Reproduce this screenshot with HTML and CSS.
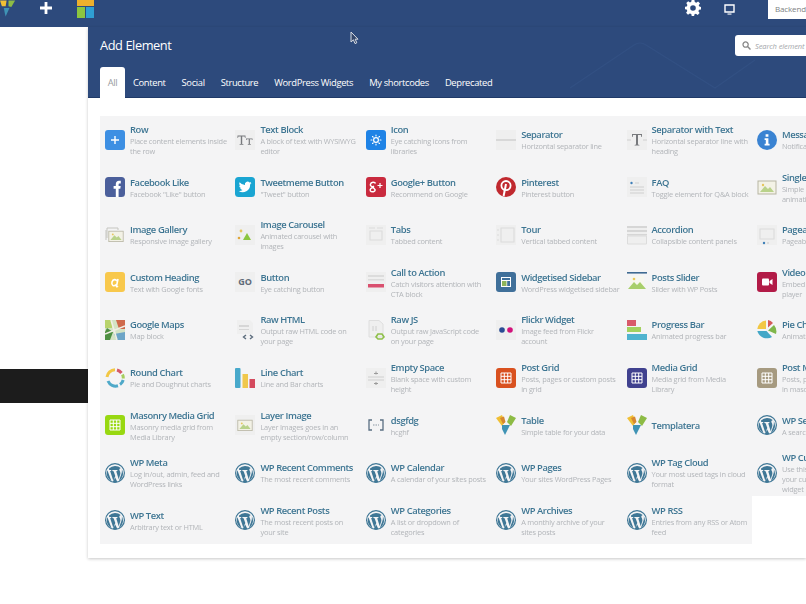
FILE: index.html
```html
<!DOCTYPE html>
<html lang="en">
<head>
<meta charset="utf-8">
<title>Add Element</title>
<link rel="stylesheet" href="styles.css">
</head>
<body>
<svg class="sprite" xmlns="http://www.w3.org/2000/svg">
  <symbol id="wp" viewBox="0 0 20 20"><circle cx="10" cy="10" r="9.4" fill="none" stroke="#3f7796" stroke-width="1.2"/><path fill="#3f7796" d="M2.4 7.2 6.6 18.4A9 9 0 0 1 2.4 7.2ZM4 5.4A9 9 0 0 1 16 5.2C14.6 5 13.9 6.4 14.6 7.6 15.3 9 15.6 10 15.2 11.6L13.7 16.2 11.2 8.2 12.4 8V7H7.4V8L8.6 8.2 10.3 13 8.3 17.8 5.1 8.1 6.2 8V7H4.2ZM10.2 14.4 12.4 18.9A9 9 0 0 1 7.8 19ZM16.8 6.2A9 9 0 0 1 13.8 18.3L16.4 11C16.9 9.4 17 7.8 16.8 6.2Z"/></symbol>
  <symbol id="vc" viewBox="0 0 20 20"><path fill="#f0bf35" d="M0 3 6 0 9 7 6 11Z"/><path fill="#8dbb45" d="M11 7 14 0 20 3 15 11Z"/><path fill="#3f93b5" d="M6 10 14 10 9 20 6 14Z"/><path fill="#d6872f" d="M4 3 8 1.500 9.500 7 7 9Z"/></symbol>
  <symbol id="img" viewBox="0 0 20 20"><rect x="1" y="4" width="18" height="13" fill="#f3f2e6" stroke="#b7b5a3"/><path fill="#b9d28a" d="M3 15 8 9 11 12 13 10 17 15Z"/><circle cx="6" cy="8" r="1.2" fill="#e5c65d"/></symbol>
  <symbol id="grid" viewBox="0 0 20 20"><path fill="none" stroke="#fff" stroke-width="1" d="M5 5H15V15H5ZM8.3 5V15M11.7 5V15M5 8.3H15M5 11.7H15"/></symbol>
</svg>

<header class="topbar">
  <svg class="logo" viewBox="0 0 18 18"><path fill="#f0bf35" d="M0 0H7L6 6 2 6Z"/><path fill="#8dbb45" d="M9 0H16L12 7 9 6Z"/><path fill="#3f93b5" d="M4 8 10 8 6 17 5 13Z"/></svg>
  <svg class="plus" viewBox="0 0 12 12"><path fill="#fff" d="M4.6 0H7.4V4.6H12V7.4H7.4V12H4.6V7.4H0V4.6H4.6Z"/></svg>
  <svg class="layout" viewBox="0 0 17 18"><rect width="17" height="6" fill="#eeb02c"/><rect y="7" width="8" height="11" fill="#8cc63f"/><rect x="9" y="7" width="8" height="11" fill="#2f9fd3"/></svg>
  <span class="spacer"></span>
  <svg class="gear" viewBox="0 0 16 16"><path fill="#fff" fill-rule="evenodd" d="M6.6 0H9.4L9.8 2.1 11.3 2.7 13.1 1.5 15 3.4 13.7 5.2 14.3 6.6 16 7V9.4L14 9.8 13.4 11.3 14.6 13.1 12.7 15 10.9 13.7 9.5 14.3 9.1 16H6.7L6.3 14.1 4.8 13.5 3 14.7 1.1 12.8 2.3 11 1.7 9.6 0 9.2V6.8L1.8 6.4 2.4 4.9 1.3 3.1 3.2 1.2 5 2.4 6.3 1.8ZM8 5.2A2.8 2.8 0 1 0 8 10.8 2.8 2.8 0 1 0 8 5.2Z"/></svg>
  <svg class="monitor" viewBox="0 0 11 11"><path fill="none" stroke="#fff" stroke-width="1.4" d="M1 1H10V8H1Z"/><path fill="#fff" d="M3.5 9.5H7.5V10.6H3.5Z"/></svg>
  <div class="backend">Backend Editor</div>
</header>

<main class="workspace">
  <aside class="side"><div class="blackbar"></div></aside>
  <section class="modal">
    <div class="modal-head">
      <svg class="decor" viewBox="0 0 240 60"><path fill="none" stroke="#325083" stroke-width="1.2" d="M4 51 68 8Q74 4 80 8L149 51 189 23"/></svg>
      <div class="head-top">
        <h1 class="title">Add Element</h1>
        <div class="search">
          <svg class="search-ico" viewBox="0 0 10 10"><circle cx="4" cy="4" r="2.9" fill="none" stroke="#888" stroke-width="1.4"/><path stroke="#888" stroke-width="1.6" d="M6.2 6.2 9.4 9.4"/></svg>
          <span class="search-text">Search element</span>
        </div>
        <svg class="cursor" viewBox="0 0 9 14"><path fill="#33466a" stroke="#d9dde4" stroke-width="1" d="M1 1V11L3.4 8.8 5 12.6 6.8 11.8 5.2 8.2H8Z"/></svg>
      </div>
      <nav class="tabs">
        <span class="tab active">All</span>
        <span class="tab">Content</span>
        <span class="tab">Social</span>
        <span class="tab">Structure</span>
        <span class="tab">WordPress Widgets</span>
        <span class="tab">My shortcodes</span>
        <span class="tab">Deprecated</span>
      </nav>
    </div>

    <div class="grid">
      <!-- row 1 -->
      <article class="item"><svg class="ico" viewBox="0 0 20 20"><rect width="20" height="20" rx="3" fill="#3d8fe3"/><path fill="#fff" d="M9.3 6H10.7V9.3H14V10.7H10.7V14H9.3V10.7H6V9.3H9.3Z"/></svg><div class="txt"><h2>Row</h2><p class="oneline">Place content elements inside<br>the row</p></div></article>
      <article class="item"><svg class="ico" viewBox="0 0 20 20"><rect width="20" height="20" fill="#efefef"/><path fill="#77797c" d="M2.5 5.5H10.5V8H10L9.6 6.4H7.2V14H8.4V14.8H4.6V14H5.8V6.4H3.4L3 8H2.5ZM11 8.5H17.5V10H17L16.7 9.2H14.9V14H15.8V14.8H12.8V14H13.7V9.2H11.8L11.5 10H11Z"/></svg><div class="txt"><h2>Text Block</h2><p>A block of text with WYSIWYG editor</p></div></article>
      <article class="item"><svg class="ico" viewBox="0 0 20 20"><rect width="20" height="20" rx="3" fill="#1f83e6"/><circle cx="10" cy="10" r="2.4" fill="none" stroke="#fff" stroke-width="1.2"/><path stroke="#fff" stroke-width="1.1" stroke-linecap="round" d="M10 5V6M10 14V15M5 10H6M14 10H15M6.5 6.5 7.2 7.2M12.8 12.8 13.5 13.5M6.5 13.5 7.2 12.8M12.8 7.2 13.5 6.5"/></svg><div class="txt"><h2>Icon</h2><p>Eye catching icons from libraries</p></div></article>
      <article class="item"><svg class="ico" viewBox="0 0 20 20"><rect width="20" height="20" fill="#efefef"/><rect y="9.4" width="20" height="1.2" fill="#c9c9c9"/></svg><div class="txt"><h2>Separator</h2><p>Horizontal separator line</p></div></article>
      <article class="item"><svg class="ico" viewBox="0 0 20 20"><rect width="20" height="20" fill="#efefef"/><path fill="#77797c" d="M5 4H15V7H14.4L14 5H11V14.5L12.4 15V15.6H7.6V15L9 14.5V5H6L5.6 7H5Z"/><path stroke="#cfcfcf" d="M16 10H20M0 10H4"/></svg><div class="txt"><h2>Separator with Text</h2><p>Horizontal separator line with heading</p></div></article>
      <article class="item"><svg class="ico" viewBox="0 0 20 20"><circle cx="10" cy="10" r="10" fill="#3a83d2"/><path fill="#fff" d="M8.6 4.2H11.4V6.8H8.6ZM7.6 8.2H11.4V13.8H12.6V15.6H7.6V13.8H8.8V10H7.6Z"/></svg><div class="txt"><h2>Message Box</h2><p>Notification box</p></div></article>
      <!-- row 2 -->
      <article class="item"><svg class="ico" viewBox="0 0 20 20"><rect width="20" height="20" rx="3.5" fill="#4b5f9b"/><path fill="#fff" d="M10.8 20V11.8H8.6V9H10.8V7.2C10.8 5 12 3.8 14 3.8H15.8V6.6H14.6C13.8 6.6 13.6 7 13.6 7.7V9H15.7L15.3 11.8H13.6V20Z"/></svg><div class="txt"><h2>Facebook Like</h2><p>Facebook "Like" button</p></div></article>
      <article class="item"><svg class="ico" viewBox="0 0 20 20"><rect width="20" height="20" rx="3.5" fill="#1aa5d2"/><path fill="#fff" d="M16.5 6C16 6.3 15.5 6.4 15 6.5 15.5 6.2 15.9 5.7 16.1 5 15.6 5.3 15 5.5 14.5 5.6A2.6 2.6 0 0 0 10 8 7.4 7.4 0 0 1 4.6 5.2C3.9 6.4 4.3 7.9 5.4 8.7 5 8.7 4.6 8.6 4.2 8.4 4.2 9.7 5.1 10.8 6.3 11 5.9 11.1 5.5 11.2 5.1 11.1 5.5 12.2 6.4 12.9 7.6 12.9A5.3 5.3 0 0 1 3.7 14 7.4 7.4 0 0 0 15.1 7.5C15.7 7.1 16.2 6.6 16.5 6Z"/></svg><div class="txt"><h2>Tweetmeme Button</h2><p>"Tweet" button</p></div></article>
      <article class="item"><svg class="ico" viewBox="0 0 20 20"><rect width="20" height="20" rx="3" fill="#c92a3e"/><path fill="none" stroke="#fff" stroke-width="1.5" d="M9.5 6.5C9 5 5 4.6 4.4 7.4 4 9.4 6.6 10.2 8 9.2M7.8 10.5C5.4 10.6 3.5 12 4.4 13.8 5.6 15.6 9.6 14.8 9 12.8 8.8 11.8 7.4 11.2 7.2 10.3"/><path stroke="#fff" stroke-width="1.2" d="M14 6V11M11.5 8.5H16.5"/></svg><div class="txt"><h2>Google+ Button</h2><p>Recommend on Google</p></div></article>
      <article class="item"><svg class="ico" viewBox="0 0 20 20"><circle cx="10" cy="10" r="10" fill="#c0292f"/><circle cx="10" cy="8.6" r="4.6" fill="none" stroke="#fff" stroke-width="1.8"/><path stroke="#fff" stroke-width="2" d="M10 7 7.6 19"/></svg><div class="txt"><h2>Pinterest</h2><p>Pinterest button</p></div></article>
      <article class="item"><svg class="ico" viewBox="0 0 20 20"><rect width="20" height="20" fill="#efefef"/><circle cx="4.5" cy="6" r="1.2" fill="#3f7fb8"/><path stroke="#cfcfcf" stroke-width="1.2" d="M8 6H12M3 10H17M3 13H17M3 16H17"/></svg><div class="txt"><h2>FAQ</h2><p class="oneline">Toggle element for Q&amp;A block</p></div></article>
      <article class="item"><svg class="ico" viewBox="0 0 20 20"><use href="#img"/></svg><div class="txt"><h2>Single Image</h2><p>Simple image with CSS animation</p></div></article>
      <!-- row 3 -->
      <article class="item"><svg class="ico" viewBox="0 0 20 20"><path fill="none" stroke="#c5c5c0" d="M2 13V3H13V5M1 15V5"/><use href="#img" x="3" y="3" width="16" height="16"/></svg><div class="txt"><h2>Image Gallery</h2><p>Responsive image gallery</p></div></article>
      <article class="item"><svg class="ico" viewBox="0 0 20 20"><rect width="20" height="20" fill="#efefef"/><circle cx="6" cy="6" r="1.4" fill="#e5c65d"/><path fill="#8cc63f" d="M8 15 12 8 16 15Z"/><circle cx="4" cy="13" r="1.3" fill="#e0a73c"/></svg><div class="txt"><h2>Image Carousel</h2><p>Animated carousel with images</p></div></article>
      <article class="item"><svg class="ico" viewBox="0 0 20 20"><rect width="20" height="20" fill="#efefef"/><path fill="none" stroke="#dcdcdc" stroke-width="1.2" d="M3 3H9M11 3H17M4 6H16V15H4Z"/></svg><div class="txt"><h2>Tabs</h2><p>Tabbed content</p></div></article>
      <article class="item"><svg class="ico" viewBox="0 0 20 20"><rect width="20" height="20" fill="#efefef"/><path fill="none" stroke="#dcdcdc" stroke-width="1.2" d="M1 5H3M1 10H3M1 15H3M5 3H18V17H5Z"/></svg><div class="txt"><h2>Tour</h2><p>Vertical tabbed content</p></div></article>
      <article class="item"><svg class="ico" viewBox="0 0 20 20"><rect y="1" width="20" height="18" fill="#efefef"/><path fill="#d6d6d6" d="M0 1H20V3H0ZM0 5H20V7H0ZM0 9H20V10.5H0Z"/><path fill="none" stroke="#dcdcdc" d="M.5 11H19.5V19H.5Z"/></svg><div class="txt"><h2>Accordion</h2><p>Collapsible content panels</p></div></article>
      <article class="item"><svg class="ico" viewBox="0 0 20 20"><rect width="20" height="20" fill="#efefef"/><path fill="none" stroke="#dcdcdc" stroke-width="1.2" d="M3 4H17V14H3Z"/><circle cx="7" cy="18" r="1.2" fill="#3f7fb8"/><circle cx="11" cy="18" r="1" fill="#d6d6d6"/></svg><div class="txt"><h2>Pageable</h2><p>Pageable content</p></div></article>
      <!-- row 4 -->
      <article class="item"><svg class="ico" viewBox="0 0 20 20"><rect width="20" height="20" rx="3" fill="#f8c84c"/><path fill="none" stroke="#fff" stroke-width="1.6" d="M13 7 11.5 14C11.4 15 12.2 15 13 14.2M11.8 9C11 7 8 7 7 10 6.2 13 8.6 15.2 11 12.5"/></svg><div class="txt"><h2>Custom Heading</h2><p>Text with Google fonts</p></div></article>
      <article class="item"><svg class="ico" viewBox="0 0 20 20"><rect width="20" height="20" fill="#efefef"/><text class="go" x="10" y="13">GO</text></svg><div class="txt"><h2>Button</h2><p>Eye catching button</p></div></article>
      <article class="item"><svg class="ico" viewBox="0 0 20 20"><rect width="20" height="20" fill="#efefef"/><path fill="#dcdcdc" d="M2 3H18V5H2ZM2 7H18V8.5H2Z"/><rect x="2" y="12" width="16" height="3.5" fill="#d9506f"/></svg><div class="txt"><h2>Call to Action</h2><p>Catch visitors attention with CTA block</p></div></article>
      <article class="item"><svg class="ico" viewBox="0 0 20 20"><rect width="20" height="20" rx="3" fill="#40709a"/><rect x="5" y="5" width="10" height="10" fill="#fff"/><rect x="6" y="6" width="8" height="2" fill="#40709a"/><rect x="6" y="9" width="4.5" height="5" fill="#8fb55a"/><rect x="11.2" y="9" width="2.8" height="5" fill="#40709a"/></svg><div class="txt"><h2>Widgetised Sidebar</h2><p class="oneline">WordPress widgetised sidebar</p></div></article>
      <article class="item"><svg class="ico" viewBox="0 0 20 20"><rect y="0" width="20" height="1.6" fill="#3f6a92"/><rect x="3" y="4" width="14" height="14" fill="#f7f7ee"/><path fill="#a8cf6b" d="M1 17 7 10 10 13 13 10 19 17Z"/><circle cx="7" cy="7" r="1.3" fill="#eac95a"/></svg><div class="txt"><h2>Posts Slider</h2><p>Slider with WP Posts</p></div></article>
      <article class="item"><svg class="ico" viewBox="0 0 20 20"><rect width="20" height="20" rx="3" fill="#b21b47"/><rect x="5" y="6.5" width="7" height="7" rx="1" fill="#fff"/><path fill="#fff" d="M12.5 9 15.5 7V13L12.5 11Z"/></svg><div class="txt"><h2>Video Player</h2><p>Embed YouTube/Vimeo player</p></div></article>
      <!-- row 5 -->
      <article class="item"><svg class="ico" viewBox="0 0 20 20"><rect width="20" height="20" fill="#d4e3c4"/><path fill="#b8d36b" d="M0 0H7V8H0Z"/><path fill="#cf6a4c" d="M11 0H20V9H14Z"/><path fill="#6ea5c7" d="M9 14 20 12V20H12Z"/><path fill="#4e8f42" d="M2 8 8 12 5 20H0V12Z"/><path stroke="#f1efe6" stroke-width="1.6" d="M0 14 20 6M6 0 12 20"/></svg><div class="txt"><h2>Google Maps</h2><p>Map block</p></div></article>
      <article class="item"><svg class="ico" viewBox="0 0 20 20"><path fill="#efefef" d="M2 0H15L18 3V14H2Z"/><path fill="#d6d6d6" d="M4 5H14V7H4ZM4 9H14V10H4Z"/><path fill="none" stroke="#5d6d7d" stroke-width="1.4" d="M11 15 8.500 17 11 19M15 15 17.500 17 15 19"/></svg><div class="txt"><h2>Raw HTML</h2><p>Output raw HTML code on your page</p></div></article>
      <article class="item"><svg class="ico" viewBox="0 0 20 20"><path fill="#efefef" stroke="#dedede" d="M3 .5H13L17 4V17H3Z"/><path stroke="#d0d0d0" d="M7 6V11M10 6V11"/><path fill="none" stroke="#8fc04a" stroke-width="1.6" d="M12 14 10 17 12 19H16L18 17 16 14Z"/></svg><div class="txt"><h2>Raw JS</h2><p>Output raw JavaScript code on your page</p></div></article>
      <article class="item"><svg class="ico" viewBox="0 0 20 20"><rect width="20" height="20" fill="#efefef"/><circle cx="6" cy="10" r="2.8" fill="#2a4b93"/><circle cx="14" cy="10" r="2.8" fill="#d2127b"/></svg><div class="txt"><h2>Flickr Widget</h2><p>Image feed from Flickr account</p></div></article>
      <article class="item"><svg class="ico" viewBox="0 0 20 20"><rect width="9" height="6" fill="#d95a6a"/><rect y="7" width="14" height="5" fill="#a3d15f"/><rect y="14" width="20" height="6" fill="#4fb3cf"/></svg><div class="txt"><h2>Progress Bar</h2><p>Animated progress bar</p></div></article>
      <article class="item"><svg class="ico" viewBox="0 0 20 20"><path fill="#f2c744" d="M9 .5V9H.3A9.500 9.500 0 0 1 9 .5Z"/><path fill="#d45a5a" d="M11 0V7.500L16 3A10 10 0 0 0 11 0Z"/><path fill="#7fb64a" d="M17 5 11 10.500 19 14A10 10 0 0 0 17 5Z"/><path fill="#43a7c7" d="M.3 11H9.500L15 17A10 10 0 0 1 .3 11Z"/></svg><div class="txt"><h2>Pie Chart</h2><p>Animated pie chart</p></div></article>
      <!-- row 6 -->
      <article class="item"><svg class="ico" viewBox="0 0 20 20"><path fill="none" stroke="#4fa9c9" stroke-width="3" d="M3 13A8.300 8.300 0 0 0 13 17.800"/><path fill="none" stroke="#4fa9c9" stroke-width="3" d="M15 16.500A8.300 8.300 0 0 0 18.200 12"/><path fill="none" stroke="#a6cd5e" stroke-width="3" d="M17.500 6.500A8.300 8.300 0 0 1 18.300 10.500"/><path fill="none" stroke="#f2c744" stroke-width="3" d="M2 9A8.300 8.300 0 0 1 10 1.700"/><path fill="none" stroke="#d45a6a" stroke-width="3" d="M12 2A8.300 8.300 0 0 1 16.500 5"/></svg><div class="txt"><h2>Round Chart</h2><p>Pie and Doughnut charts</p></div></article>
      <article class="item"><svg class="ico" viewBox="0 0 20 20"><rect x="0" y="0" width="5.500" height="20" rx="1" fill="#48a9cb"/><rect x="7.500" y="6" width="5.500" height="14" fill="#f0c84c"/><rect x="14.500" y="11" width="5.500" height="9" fill="#d44a5e"/></svg><div class="txt"><h2>Line Chart</h2><p>Line and Bar charts</p></div></article>
      <article class="item"><svg class="ico" viewBox="0 0 20 20"><rect width="20" height="20" fill="#efefef"/><path stroke="#cfcfcf" d="M2 9H18M2 12H18"/><path fill="#9b9b9b" d="M9.500 3.500H10.500V6.500H9.500ZM8 5H12V6H8ZM9.500 14H10.500V17H9.500ZM8 15H12V16H8Z"/></svg><div class="txt"><h2>Empty Space</h2><p>Blank space with custom height</p></div></article>
      <article class="item"><svg class="ico" viewBox="0 0 20 20"><rect width="20" height="20" rx="3" fill="#d9511f"/><use href="#grid"/></svg><div class="txt"><h2>Post Grid</h2><p>Posts, pages or custom posts in grid</p></div></article>
      <article class="item"><svg class="ico" viewBox="0 0 20 20"><rect width="20" height="20" rx="3" fill="#40418f"/><use href="#grid"/></svg><div class="txt"><h2>Media Grid</h2><p>Media grid from Media Library</p></div></article>
      <article class="item"><svg class="ico" viewBox="0 0 20 20"><rect width="20" height="20" rx="3" fill="#a69a80"/><use href="#grid"/></svg><div class="txt"><h2>Post Masonry Grid</h2><p>Posts, pages or custom posts in masonry grid</p></div></article>
      <!-- row 7 -->
      <article class="item"><svg class="ico" viewBox="0 0 20 20"><rect width="20" height="20" rx="3" fill="#98d811"/><use href="#grid"/></svg><div class="txt"><h2>Masonry Media Grid</h2><p>Masonry media grid from Media Library</p></div></article>
      <article class="item"><svg class="ico" viewBox="0 0 20 20"><rect width="20" height="20" fill="#efefef"/><use href="#img" x="2" y="2" width="16" height="16"/></svg><div class="txt"><h2>Layer Image</h2><p>Layer Images goes in an empty section/row/column</p></div></article>
      <article class="item"><svg class="ico" viewBox="0 0 20 20"><path fill="none" stroke="#5a6f82" stroke-width="1.300" d="M6 5H3V15H6M14 5H17V15H14"/><path stroke="#8a97a3" d="M7 10H13" stroke-dasharray="1.500 1"/></svg><div class="txt"><h2>dsgfdg</h2><p>hcghf</p></div></article>
      <article class="item"><svg class="ico" viewBox="0 0 20 20"><use href="#vc"/></svg><div class="txt"><h2>Table</h2><p>Simple table for your data</p></div></article>
      <article class="item"><svg class="ico" viewBox="0 0 20 20"><use href="#vc"/></svg><div class="txt"><h2>Templatera</h2></div></article>
      <article class="item"><svg class="ico" viewBox="0 0 20 20"><use href="#wp"/></svg><div class="txt"><h2>WP Search</h2><p>A search form</p></div></article>
      <!-- row 8 -->
      <article class="item"><svg class="ico" viewBox="0 0 20 20"><use href="#wp"/></svg><div class="txt"><h2>WP Meta</h2><p>Log in/out, admin, feed and WordPress links</p></div></article>
      <article class="item"><svg class="ico" viewBox="0 0 20 20"><use href="#wp"/></svg><div class="txt"><h2>WP Recent Comments</h2><p>The most recent comments</p></div></article>
      <article class="item"><svg class="ico" viewBox="0 0 20 20"><use href="#wp"/></svg><div class="txt"><h2>WP Calendar</h2><p>A calendar of your sites posts</p></div></article>
      <article class="item"><svg class="ico" viewBox="0 0 20 20"><use href="#wp"/></svg><div class="txt"><h2>WP Pages</h2><p>Your sites WordPress Pages</p></div></article>
      <article class="item"><svg class="ico" viewBox="0 0 20 20"><use href="#wp"/></svg><div class="txt"><h2>WP Tag Cloud</h2><p>Your most used tags in cloud format</p></div></article>
      <article class="item"><svg class="ico" viewBox="0 0 20 20"><use href="#wp"/></svg><div class="txt"><h2>WP Custom Menu</h2><p>Use this widget to add one of your custom menus as a widget</p></div></article>
      <!-- row 9 -->
      <article class="item"><svg class="ico" viewBox="0 0 20 20"><use href="#wp"/></svg><div class="txt"><h2>WP Text</h2><p>Arbitrary text or HTML</p></div></article>
      <article class="item"><svg class="ico" viewBox="0 0 20 20"><use href="#wp"/></svg><div class="txt"><h2>WP Recent Posts</h2><p>The most recent posts on your site</p></div></article>
      <article class="item"><svg class="ico" viewBox="0 0 20 20"><use href="#wp"/></svg><div class="txt"><h2>WP Categories</h2><p>A list or dropdown of categories</p></div></article>
      <article class="item"><svg class="ico" viewBox="0 0 20 20"><use href="#wp"/></svg><div class="txt"><h2>WP Archives</h2><p>A monthly archive of your sites posts</p></div></article>
      <article class="item"><svg class="ico" viewBox="0 0 20 20"><use href="#wp"/></svg><div class="txt"><h2>WP RSS</h2><p>Entries from any RSS or Atom feed</p></div></article>
    </div>
  </section>
</main>
</body>
</html>
```

FILE: styles.css
```css
* { box-sizing: border-box; }
html, body { margin: 0; padding: 0; }
body {
  width: 806px;
  height: 604px;
  overflow: hidden;
  background: #fff;
  font-family: "Open Sans", "Liberation Sans", sans-serif;
  filter: blur(0.55px);
}
.sprite { display: none; }

.topbar {
  height: 27px;
  background: #2d4a7c;
  display: flex;
  align-items: flex-start;
  overflow: hidden;
}
.logo { width: 17px; height: 18px; flex: none; }
.plus { width: 12px; height: 12px; flex: none; margin: 2px 0 0 23px; }
.layout { width: 17px; height: 18px; flex: none; margin-left: 25px; }
.spacer { flex: 1; }
.gear { width: 16px; height: 16px; flex: none; margin-right: 23px; }
.monitor { width: 11px; height: 11px; flex: none; margin: 4px 33px 0 0; }
.backend {
  width: 38px;
  height: 19px;
  flex: none;
  background: #fff;
  color: #7d7f83;
  font-size: 8px;
  letter-spacing: -0.15px;
  line-height: 17px;
  padding-left: 7px;
  white-space: nowrap;
  overflow: hidden;
}

.workspace { display: flex; height: 531px; }
.side { width: 88px; flex: none; padding-top: 342px; }
.blackbar { height: 34px; background: #1c1c1c; }

.modal {
  width: 718px;
  flex: none;
  background: #fff;
  overflow: hidden;
  box-shadow: 0 1px 3px rgba(0,0,0,.22);
}
.modal-head {
  height: 71px;
  background: #2d4a7c;
  border-bottom: 1px solid #1f3a68;
  position: relative;
  padding-left: 12px;
}
.decor { position: absolute; left: 478px; top: 10px; width: 240px; height: 60px; }
.cursor { position: absolute; left: 250px; top: 4px; width: 9px; height: 14px; }
.head-top {
  height: 40px;
  display: flex;
  align-items: flex-start;
  justify-content: space-between;
  position: relative;
}
.title {
  margin: 8px 0 0;
  font-size: 12.8px;
  font-weight: 400;
  letter-spacing: -0.42px;
  line-height: 20px;
  color: #fff;
}
.search {
  width: 78px;
  height: 21px;
  margin: 8px -7px 0 0;
  background: #fff;
  border-radius: 3px;
  display: flex;
  align-items: center;
  gap: 4px;
  padding-left: 7px;
  overflow: hidden;
  white-space: nowrap;
  position: relative;
}
.search-ico { width: 9px; height: 9px; flex: none; }
.search-text { font-size: 7.5px; font-style: italic; color: #a4a6aa; letter-spacing: -0.1px; }
.tabs { display: flex; align-items: flex-end; height: 31px; gap: 16px; position: relative; }
.tab {
  height: 31px;
  line-height: 32px;
  font-size: 9.4px;
  font-weight: 500;
  letter-spacing: -0.35px;
  color: #fff;
  white-space: nowrap;
}
.tab.active {
  width: 25px;
  margin-right: -8px;
  text-align: center;
  background: #fff;
  color: #9a9ca0;
  font-weight: 400;
  border-radius: 3px 3px 0 0;
}

.grid {
  margin: 18px 0 0 12px;
  display: grid;
  grid-template-columns: repeat(6, 130.4px);
  grid-auto-rows: 47.55px;
  width: 783px;
}
.item {
  background: #f4f4f5;
  display: flex;
  align-items: center;
  gap: 5px;
  padding: 0 4px 0 5px;
  min-width: 0;
}
.ico { width: 20px; height: 20px; flex: none; }
.go { font-family: "Open Sans", sans-serif; font-size: 9px; font-weight: 700; fill: #5f6b78; text-anchor: middle; }
.txt { min-width: 0; width: 96.5px; flex: none; }
.txt h2 {
  margin: 0;
  font-size: 9.4px;
  font-weight: 600;
  letter-spacing: -0.4px;
  line-height: 13px;
  color: #3d7592;
  white-space: nowrap;
}
.txt p {
  margin: 0;
  font-size: 7.4px;
  letter-spacing: -0.2px;
  line-height: 10px;
  color: #b2b5b9;
}
.txt p.oneline { white-space: nowrap; }
```
